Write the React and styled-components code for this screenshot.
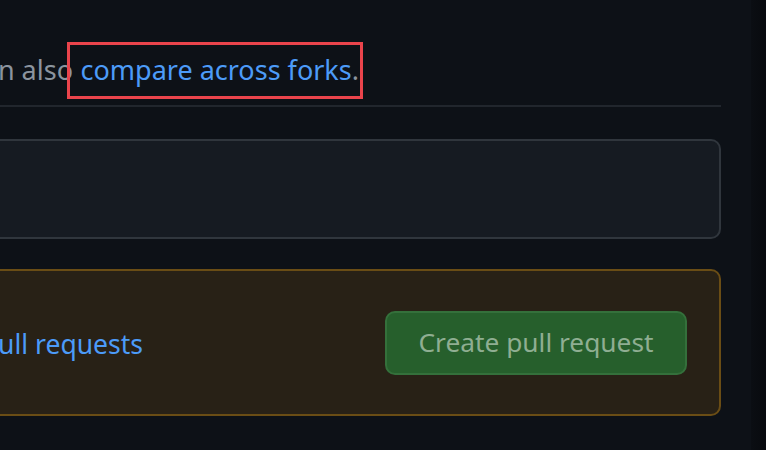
import React from 'react'
import styled, { createGlobalStyle } from 'styled-components'

const GlobalStyle = createGlobalStyle`
  html, body {
    margin: 0;
    padding: 0;
    background-color: #0d1117;
    overflow: hidden;
  }

  body {
    font-family: 'Noto Sans', 'Open Sans', sans-serif;
    -webkit-font-smoothing: antialiased;
  }
`

const Page = styled.div`
  display: flex;
  height: 450px;
`

const Main = styled.main`
  flex: 1;
  min-width: 0;
  padding-right: 30px;
  overflow: hidden;
`

const Column = styled.div`
  margin-left: -60px;
`

const Gutter = styled.div`
  flex: 0 0 15px;
  background: linear-gradient(90deg, #0b0e13, #080a0e);
`

const Lead = styled.div`
  display: flex;
  align-items: baseline;
  padding-top: 52px;
  font-size: 27px;
  line-height: 36px;
  color: #8b949e;
  white-space: nowrap;
`

const Clipped = styled.span`
  flex: 0 0 ${props => props.width}px;
  display: flex;
  justify-content: flex-end;
  overflow: hidden;
`

const Highlight = styled.span`
  position: relative;
  margin-left: 7.5px;

  &::after {
    content: '';
    position: absolute;
    top: -10px;
    bottom: -11px;
    left: -14px;
    right: -4px;
    border: 3px solid #ea444c;
    pointer-events: none;
  }
`

const Link = styled.a`
  color: #4c9bf8;
  text-decoration: none;
`

const Divider = styled.hr`
  margin: 17px 0 0;
  border: 0;
  height: 2px;
  background-color: #21262d;
`

const Panel = styled.div`
  box-sizing: border-box;
  margin-top: 32px;
  height: 100px;
  background-color: #161b22;
  border: 2px solid #30363d;
  border-radius: 10px;
`

const Notice = styled.div`
  box-sizing: border-box;
  display: flex;
  align-items: center;
  justify-content: space-between;
  margin-top: 30px;
  height: 147px;
  padding: 2px 32px 0 16px;
  background-color: #282116;
  border: 2px solid #6a4d15;
  border-radius: 10px;
  font-size: 26.5px;
  line-height: 36px;
  white-space: nowrap;
`

const Button = styled.button`
  box-sizing: border-box;
  display: flex;
  align-items: center;
  justify-content: center;
  width: 302px;
  height: 64px;
  margin-top: -2px;
  padding: 0 0 2px;
  font-family: inherit;
  font-size: 26.3px;
  color: #8fae92;
  background-color: #265f2c;
  border: 2px solid #34703b;
  border-radius: 10px;
  cursor: not-allowed;
`

export default function App() {
  return (
    <>
      <GlobalStyle />
      <Page>
        <Main>
          <Column>
            <Lead>
              <Clipped width={133}>If you need to, you can also</Clipped>
              <Highlight>
                <Link href="#">compare across forks</Link>.
              </Highlight>
            </Lead>
            <Divider />
            <Panel />
            <Notice>
              <Clipped width={185}>
                <Link href="#">Learn about pull requests</Link>
              </Clipped>
              <Button disabled>Create pull request</Button>
            </Notice>
          </Column>
        </Main>
        <Gutter />
      </Page>
    </>
  )
}
